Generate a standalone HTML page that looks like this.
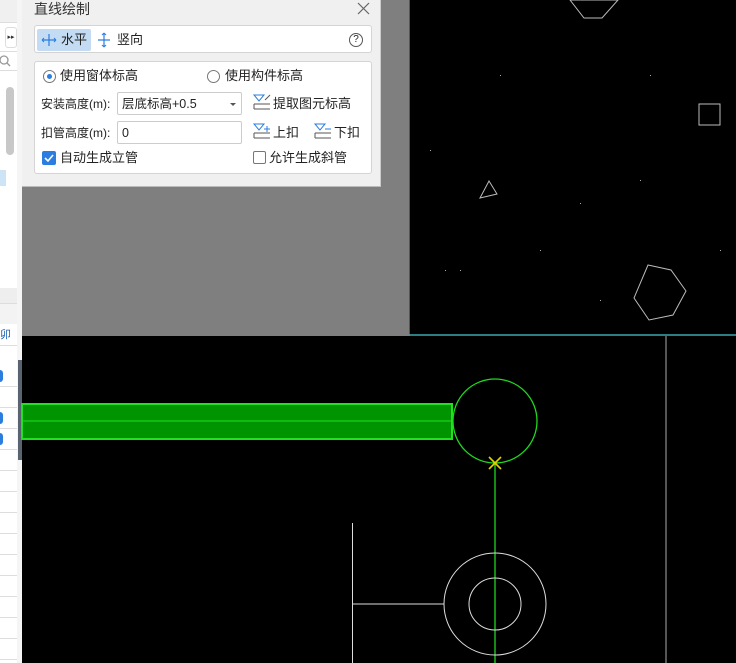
<!DOCTYPE html>
<html><head><meta charset="utf-8"><style>
*{margin:0;padding:0;box-sizing:border-box}
body{width:736px;height:663px;overflow:hidden;position:relative;background:#000;font-family:"Liberation Sans","Noto Sans CJK SC",sans-serif;font-size:12px;color:#222}
.abs{position:absolute}
.dlg{left:22px;top:0;width:359px;height:187px;background:#f0f0f0;border-right:1px solid #ccc;border-bottom:1px solid #bbb}
.box{background:#fff;border:1px solid #d4d4d4;border-radius:3px}
.t{position:absolute;white-space:nowrap;line-height:16px}
.inp{position:absolute;background:#fff;border:1px solid #ccc;border-radius:2px;height:23px}
.radio{position:absolute;width:13px;height:13px;border:1px solid #777;border-radius:50%;background:#fff}
svg.i{position:absolute;overflow:visible}
</style></head><body>
<div class="abs" style="left:22px;top:0;width:388px;height:336px;background:#7f7f7f"></div>
<div class="abs" style="left:0;top:0;width:17px;height:663px;background:#fff"></div>
<div class="abs" style="left:0;top:0;width:17px;height:23px;background:#f0f0f0;border-bottom:1px solid #ddd"></div>
<div class="abs" style="left:5px;top:27px;width:12px;height:21px;border:1px solid #ddd;border-radius:3px;font-size:7px;line-height:19px;text-align:center;color:#333">▸▸</div>
<div class="abs" style="left:0;top:51px;width:17px;height:20px;border-top:1px solid #ddd;border-bottom:1px solid #ddd"></div>
<svg class="i" style="left:0;top:55px" width="12" height="12"><circle cx="4" cy="5" r="4" fill="none" stroke="#999" stroke-width="1.3"/><line x1="7" y1="8" x2="10" y2="11" stroke="#999" stroke-width="1.3"/></svg>
<div class="abs" style="left:6px;top:87px;width:8px;height:68px;background:#c8c8c8;border-radius:4px"></div>
<div class="abs" style="left:0;top:170px;width:6px;height:16px;background:#cde4f7"></div>
<div class="abs" style="left:17px;top:0;width:5px;height:663px;background:#f5f5f5"></div>
<div class="abs" style="left:18px;top:360px;width:4px;height:100px;background:#5a6470"></div>
<div class="abs" style="left:0;top:288px;width:17px;height:16px;background:#eee;border-bottom:1px solid #ddd"></div>
<div class="abs" style="left:0;top:304px;width:17px;height:20px;background:#f3f3f3"></div>
<div class="abs" style="left:0;top:324px;width:17px;height:22px;border-bottom:1px solid #ddd;font-size:11px;line-height:22px;color:#1a5fb4">卯</div>
<div class="abs" style="left:0;top:366px;width:17px;height:297px;background:repeating-linear-gradient(#fff 0,#fff 20px,#ddd 20px,#ddd 21px)"></div>
<div class="abs" style="left:0;top:370px;width:3px;height:12px;background:#2b7de0;border-radius:0 3px 3px 0"></div>
<div class="abs" style="left:0;top:412px;width:3px;height:12px;background:#2b7de0;border-radius:0 3px 3px 0"></div>
<div class="abs" style="left:0;top:433px;width:3px;height:12px;background:#2b7de0;border-radius:0 3px 3px 0"></div>

<svg class="abs" style="left:0;top:0" width="736" height="663">
<line x1="409.5" y1="0" x2="409.5" y2="336" stroke="#555"/>
<line x1="409" y1="335" x2="736" y2="335" stroke="#3aa7b0" stroke-width="1.5"/>
<line x1="666" y1="336" x2="666" y2="663" stroke="#555" stroke-width="2"/>
<polygon points="570,0 584,18 602,18 618,0" fill="none" stroke="#bbb"/>
<rect x="699" y="104" width="21" height="21" fill="none" stroke="#bbb"/>
<polygon points="480,198 489,181 497,194" fill="none" stroke="#bbb"/>
<polygon points="648,265 671,270 686,291 673,315 649,320 634,298" fill="none" stroke="#bbb"/>
<g fill="#aaa"><rect x="500" y="75" width="1" height="1"/><rect x="430" y="150" width="1" height="1"/><rect x="580" y="203" width="1" height="1"/><rect x="640" y="180" width="1" height="1"/><rect x="540" y="250" width="1" height="1"/><rect x="460" y="270" width="1" height="1"/><rect x="650" y="75" width="1" height="1"/><rect x="720" y="250" width="1" height="1"/><rect x="445" y="270" width="1" height="1"/><rect x="600" y="300" width="1" height="1"/></g>
<rect x="22" y="404" width="430" height="35" fill="#009400" stroke="#22e022" stroke-width="2"/>
<line x1="22" y1="421" x2="452" y2="421" stroke="#22e022"/>
<circle cx="495" cy="421" r="42" fill="none" stroke="#1ed81e" stroke-width="1.3"/>
<line x1="495" y1="463" x2="495" y2="663" stroke="#1ed81e" stroke-width="1.3"/>
<path d="M489 457 L501 469 M501 457 L489 469" stroke="#e0d000" stroke-width="1.6"/>
<circle cx="495" cy="604" r="51" fill="none" stroke="#ddd"/>
<circle cx="495" cy="604" r="26" fill="none" stroke="#ddd"/>
<line x1="352.5" y1="523" x2="352.5" y2="663" stroke="#ddd"/>
<line x1="352" y1="604" x2="444" y2="604" stroke="#ddd"/>
</svg>

<div class="abs dlg">
 <div class="t" style="left:12px;top:1px;font-size:14px;color:#333">直线绘制</div>
 <svg class="i" style="left:336px;top:3px" width="11" height="11"><path d="M0 0L11 11M11 0L0 11" stroke="#666" stroke-width="1.2"/></svg>
 <div class="abs box" style="left:12px;top:25px;width:338px;height:28px">
  <div class="abs" style="left:2px;top:3px;width:54px;height:22px;background:#c3dcf3;border-radius:2px"></div>
  <svg class="i" style="left:6px;top:7px" width="16" height="14"><path d="M1 7H15M8 1V13" stroke="#2b7de0" stroke-width="1.2"/><path d="M1 7l2-2M1 7l2 2M15 7l-2-2M15 7l-2 2" stroke="#2b7de0"/></svg>
  <div class="t" style="left:26px;top:6px;font-size:13px">水平</div>
  <svg class="i" style="left:62px;top:6px" width="14" height="16"><path d="M1 8H13M7 1V15" stroke="#2b7de0" stroke-width="1.2"/><path d="M7 1l-2 2M7 1l2 2M7 15l-2-2M7 15l2-2" stroke="#2b7de0"/></svg>
  <div class="t" style="left:82px;top:6px;font-size:13px">竖向</div>
  <div class="abs" style="left:314px;top:7px;width:14px;height:14px;border:1px solid #555;border-radius:50%;font-size:10px;line-height:12px;text-align:center">?</div>
 </div>
 <div class="abs box" style="left:12px;top:61px;width:338px;height:113px">
  <div class="radio" style="left:8px;top:8px"><div style="position:absolute;left:3px;top:3px;width:5px;height:5px;border-radius:50%;background:#2b7de0"></div></div>
  <div class="t" style="left:25px;top:6px;font-size:13px">使用窗体标高</div>
  <div class="radio" style="left:172px;top:8px"></div>
  <div class="t" style="left:190px;top:6px;font-size:13px">使用构件标高</div>
  <div class="t" style="left:6px;top:34px;font-size:12px">安装高度(m):</div>
  <div class="inp" style="left:82px;top:30px;width:125px"><span class="t" style="left:4px;top:3px;font-size:12.5px">层底标高+0.5</span><svg class="i" style="right:5px;top:10px" width="6" height="4"><path d="M0 0H6L3 3Z" fill="#555"/></svg></div>
  <svg class="i" style="left:218px;top:32px" width="18" height="16"><path d="M1 1H11L6 7Z" fill="none" stroke="#2b7de0"/><path d="M1 10H17M1 15H17M1 10V15" stroke="#555" fill="none"/><path d="M12 6L17 1" stroke="#555"/></svg>
  <div class="t" style="left:238px;top:34px;font-size:13px">提取图元标高</div>
  <div class="t" style="left:6px;top:63px;font-size:12px">扣管高度(m):</div>
  <div class="inp" style="left:82px;top:59px;width:125px"><span class="t" style="left:4px;top:3px;font-size:12.5px">0</span></div>
  <svg class="i" style="left:218px;top:61px" width="18" height="16"><path d="M1 1H11L6 7Z" fill="none" stroke="#2b7de0"/><path d="M1 10H17M1 15H17M1 10V15" stroke="#555" fill="none"/><path d="M14 3V9M11 6H17" stroke="#2b7de0"/></svg>
  <div class="t" style="left:238px;top:63px;font-size:13px">上扣</div>
  <svg class="i" style="left:279px;top:61px" width="18" height="16"><path d="M1 1H11L6 7Z" fill="none" stroke="#2b7de0"/><path d="M1 10H17M1 15H17M1 10V15" stroke="#555" fill="none"/><path d="M11 6H17" stroke="#2b7de0"/></svg>
  <div class="t" style="left:299px;top:63px;font-size:13px">下扣</div>
  <div class="abs" style="left:7px;top:89px;width:14px;height:14px;background:#2b7de0;border-radius:2px"></div>
  <svg class="i" style="left:9px;top:92px" width="10" height="8"><path d="M1 4L4 7L9 1" stroke="#fff" stroke-width="1.6" fill="none"/></svg>
  <div class="t" style="left:25px;top:88px;font-size:13px">自动生成立管</div>
  <div class="abs" style="left:218px;top:89px;width:13px;height:13px;border:1px solid #777;border-radius:2px;background:#fff"></div>
  <div class="t" style="left:234px;top:88px;font-size:13px">允许生成斜管</div>
 </div>
</div>
</body></html>
